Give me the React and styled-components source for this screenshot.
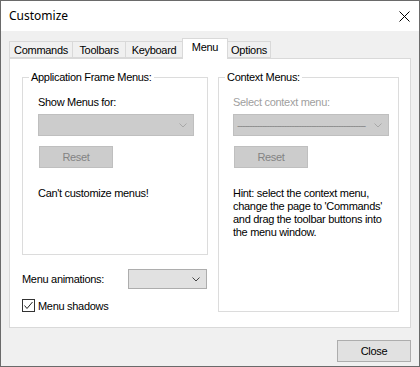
import styled, { createGlobalStyle } from "styled-components";

const GlobalStyle = createGlobalStyle`
  html, body {
    margin: 0;
    padding: 0;
    background: #ffffff;
  }
  body {
    font-family: "Liberation Sans", Arial, sans-serif;
    font-size: 11px;
    letter-spacing: -0.3px;
    color: #000;
  }
`;

const Window = styled.div`
  width: 420px;
  height: 367px;
  box-sizing: border-box;
  border: 1px solid #6a6a6a;
  display: flex;
  flex-direction: column;
  background: #f0f0f0;
`;

const TitleBar = styled.div`
  height: 30px;
  flex: none;
  background: #ffffff;
  display: flex;
  align-items: center;
  justify-content: space-between;
  padding: 0 9px 0 8px;
`;

const Title = styled.span`
  font-family: "Noto Sans", "Open Sans", sans-serif;
  font-size: 12px;
  letter-spacing: 0;
  line-height: 16px;
`;

const Body = styled.div`
  flex: 1;
  display: flex;
  flex-direction: column;
  padding: 7px 8px 0 8px;
`;

const TabRow = styled.div`
  display: flex;
  align-items: flex-end;
  height: 20px;
`;

const Tab = styled.div`
  position: relative;
  box-sizing: border-box;
  width: ${(p) => p.$w}px;
  height: ${(p) => (p.$active ? 21 : 17)}px;
  margin-left: ${(p) => (p.$first ? 0 : -1)}px;
  margin-bottom: ${(p) => (p.$active ? -1 : 0)}px;
  border: 1px solid #d9d9d9;
  border-bottom: ${(p) => (p.$active ? "none" : "1px solid #d9d9d9")};
  background: ${(p) => (p.$active ? "#ffffff" : "#f0f0f0")};
  z-index: ${(p) => (p.$active ? 2 : 1)};
  display: flex;
  justify-content: center;
  padding-top: 2px;
  line-height: 13px;
`;

const Panel = styled.div`
  box-sizing: border-box;
  height: 270px;
  background: #ffffff;
  border: 1px solid #d9d9d9;
  display: flex;
  align-items: flex-start;
  gap: 10px;
  padding: 18px 10px 0 12px;
`;

const Column = styled.div`
  width: 186px;
  display: flex;
  flex-direction: column;
`;

const GroupBox = styled.div`
  box-sizing: border-box;
  width: ${(p) => p.$w}px;
  height: ${(p) => p.$h}px;
  border: 1px solid #dcdcdc;
  display: flex;
  flex-direction: column;
`;

const Legend = styled.span`
  align-self: flex-start;
  margin: -7px 0 0 6px;
  padding: 0 2px;
  background: #ffffff;
  line-height: 13px;
  white-space: nowrap;
`;

const GroupContent = styled.div`
  display: flex;
  flex-direction: column;
  align-items: flex-start;
  padding-left: ${(p) => p.$pad}px;
`;

const Label = styled.span`
  line-height: 13px;
  margin-top: ${(p) => p.$mt || 0}px;
  color: ${(p) => (p.$disabled ? "#a0a0a0" : "#000")};
  white-space: nowrap;
`;

const Select = styled.div`
  box-sizing: border-box;
  width: ${(p) => p.$w}px;
  height: ${(p) => p.$h}px;
  margin-top: ${(p) => p.$mt || 0}px;
  border: 1px solid ${(p) => (p.$disabled ? "#bfbfbf" : "#adadad")};
  background: ${(p) => (p.$disabled ? "#cccccc" : "#e1e1e1")};
  display: flex;
  align-items: center;
  padding: 0 6px 0 3px;
`;

const Dashes = styled.span`
  flex: none;
  white-space: nowrap;
  color: #8c8c8c;
  letter-spacing: -1.2px;
  line-height: 13px;
`;

const Chevron = ({ color }) => (
  <svg width="8" height="5" viewBox="0 0 8 5" style={{ marginLeft: "auto", flex: "none" }}>
    <polyline points="0.5,0.5 4,4 7.5,0.5" fill="none" stroke={color} strokeWidth="1" />
  </svg>
);

const Button = styled.div`
  box-sizing: border-box;
  width: ${(p) => p.$w}px;
  height: 22px;
  margin-top: ${(p) => p.$mt || 0}px;
  margin-left: ${(p) => p.$ml || 0}px;
  border: 1px solid ${(p) => (p.$disabled ? "#bfbfbf" : "#adadad")};
  background: ${(p) => (p.$disabled ? "#cccccc" : "#e1e1e1")};
  color: ${(p) => (p.$disabled ? "#838383" : "#000")};
  display: flex;
  align-items: center;
  justify-content: center;
  line-height: 13px;
`;

const Hint = styled.div`
  margin-top: ${(p) => p.$mt}px;
  line-height: 13px;
  white-space: nowrap;
`;

const Row = styled.div`
  display: flex;
  align-items: center;
  height: ${(p) => p.$h}px;
  margin-top: ${(p) => p.$mt}px;
  gap: ${(p) => p.$gap || 0}px;
`;

const RowLabel = styled.span`
  width: 106px;
  line-height: 13px;
`;

const CheckBox = styled.span`
  box-sizing: border-box;
  width: 13px;
  height: 13px;
  border: 1px solid #333333;
  background: #ffffff;
  display: flex;
  align-items: center;
  justify-content: center;
`;

const Footer = styled.div`
  display: flex;
  justify-content: flex-end;
  margin-top: 12px;
`;

const tabs = [
  { name: "Commands", w: 64 },
  { name: "Toolbars", w: 54 },
  { name: "Keyboard", w: 58 },
  { name: "Menu", w: 46, active: true },
  { name: "Options", w: 44 },
];

export default function App() {
  return (
    <>
      <GlobalStyle />
      <Window>
        <TitleBar>
          <Title>Customize</Title>
          <svg width="11" height="11" viewBox="0 0 11 11">
            <path d="M0.5 0.5 L10.5 10.5 M10.5 0.5 L0.5 10.5" stroke="#000" strokeWidth="1" />
          </svg>
        </TitleBar>
        <Body>
          <TabRow>
            {tabs.map((t, i) => (
              <Tab key={t.name} $w={t.w} $active={t.active} $first={i === 0}>
                {t.name}
              </Tab>
            ))}
          </TabRow>
          <Panel>
            <Column>
              <GroupBox $w={186} $h={178}>
                <Legend>Application Frame Menus:</Legend>
                <GroupContent $pad={15}>
                  <Label $mt={12}>Show Menus for:</Label>
                  <Select $w={156} $h={22} $mt={5} $disabled>
                    <Chevron color="#a8a8a8" />
                  </Select>
                  <Button $w={74} $mt={10} $ml={1} $disabled>
                    Reset
                  </Button>
                  <Label $mt={19}>Can't customize menus!</Label>
                </GroupContent>
              </GroupBox>
              <Row $h={20} $mt={14}>
                <RowLabel>Menu animations:</RowLabel>
                <Select $w={79} $h={20}>
                  <Chevron color="#444444" />
                </Select>
              </Row>
              <Row $h={13} $mt={10} $gap={3}>
                <CheckBox>
                  <svg width="11" height="11" viewBox="0 0 11 11">
                    <polyline points="1.5,5.5 4,8.5 9.5,2" fill="none" stroke="#222" strokeWidth="1" />
                  </svg>
                </CheckBox>
                <span>Menu shadows</span>
              </Row>
            </Column>
            <GroupBox $w={181} $h={235}>
              <Legend>Context Menus:</Legend>
              <GroupContent $pad={14}>
                <Label $mt={12} $disabled>
                  Select context menu:
                </Label>
                <Select $w={156} $h={22} $mt={5} $disabled>
                  <Dashes>----------------------------------------------------</Dashes>
                  <Chevron color="#a8a8a8" />
                </Select>
                <Button $w={74} $mt={10} $ml={1} $disabled>
                  Reset
                </Button>
                <Hint $mt={19}>
                  Hint: select the context menu,
                  <br />
                  change the page to 'Commands'
                  <br />
                  and drag the toolbar buttons into
                  <br />
                  the menu window.
                </Hint>
              </GroupContent>
            </GroupBox>
          </Panel>
          <Footer>
            <Button $w={74}>Close</Button>
          </Footer>
        </Body>
      </Window>
    </>
  );
}
